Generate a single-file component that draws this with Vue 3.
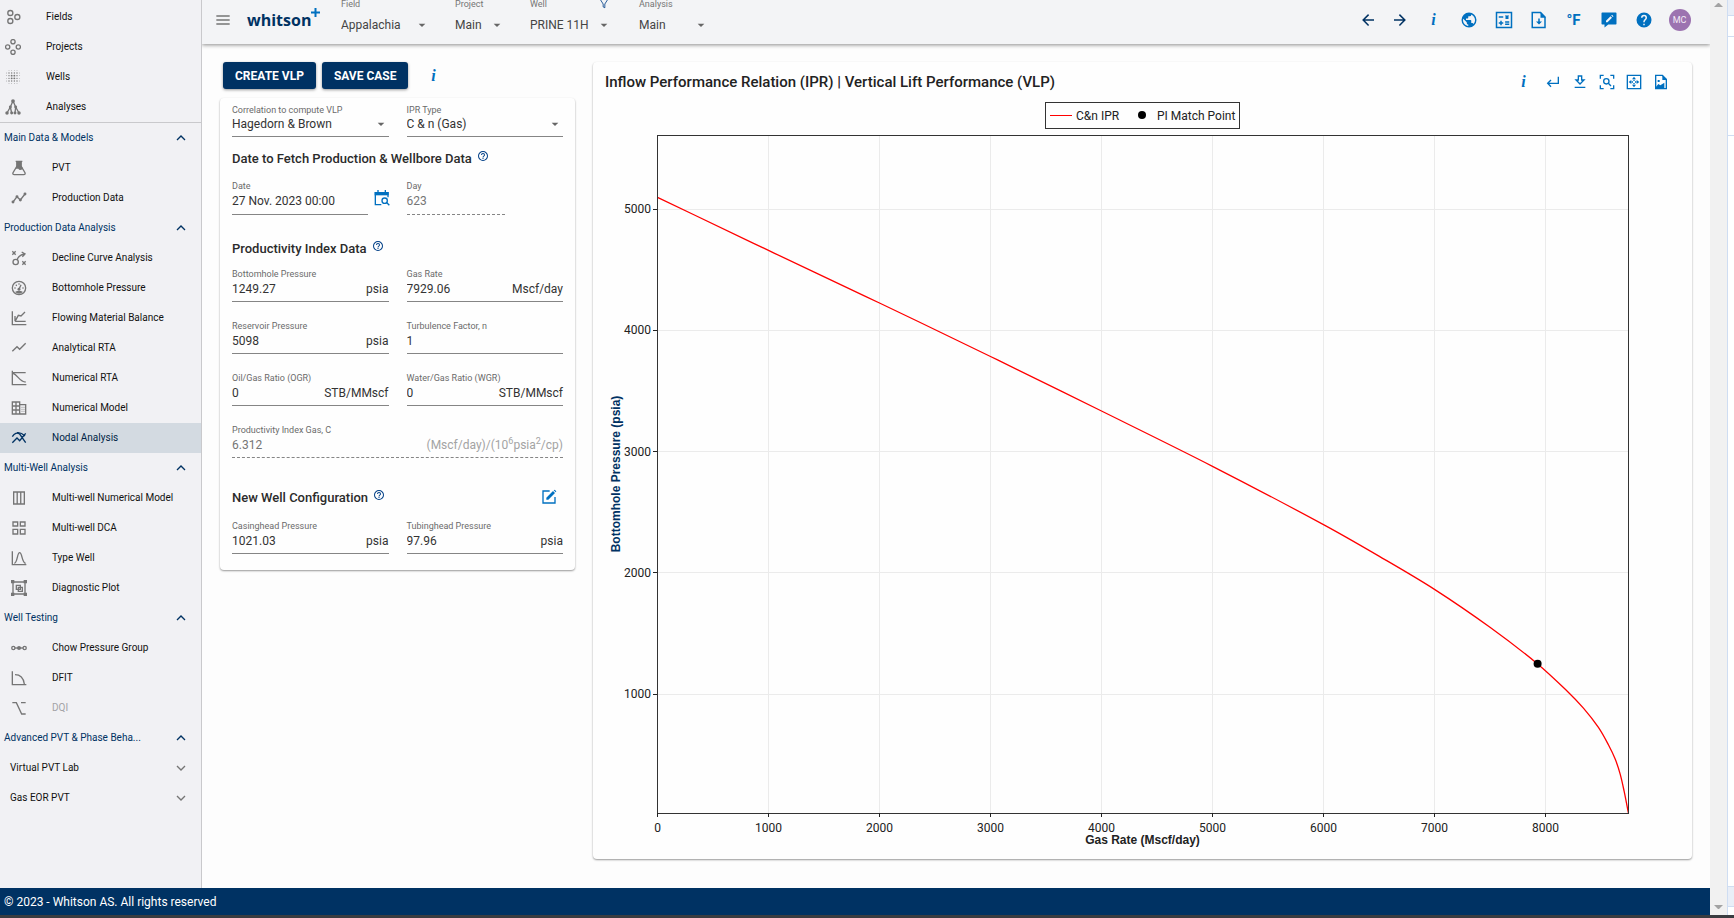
<script setup>
import { h, ref, computed, onMounted, onBeforeUnmount } from 'vue'

const solid = (d) => `<path fill="currentColor" stroke="none" fill-rule="evenodd" d="${d}"/>`
const line = (d) => `<path d="${d}"/>`
const ring = (x, y, r) => `<circle cx="${x}" cy="${y}" r="${r}"/>`
const disc = (x, y, r) => `<circle fill="currentColor" stroke="none" cx="${x}" cy="${y}" r="${r}"/>`

const wellDots = () => {
  let out = ''
  for (let r = 0; r < 6; r++) {
    for (let c = 0; c < 6; c++) {
      const d = Math.hypot(r - 2.5, c - 2.5)
      if (d < 3.4) out += disc(2 + c * 4, 2 + r * 4, d < 1 ? 1.4 : d < 2.3 ? 1 : 0.6)
    }
  }
  return out
}

const icons = {
  fields: ring(8, 6, 3.8) + ring(8, 18, 3.8) + ring(18.5, 12, 3.8),
  projects: ring(12, 4, 3.2) + ring(12, 20, 3.2) + ring(4, 12, 3.2) + ring(20, 12, 3.2),
  wells: wellDots(),
  analyses: disc(12, 3, 2.8) + disc(3, 21, 2.6) + disc(10, 21, 2.2) + disc(15, 21, 2.2) + disc(21, 21, 2.6) + disc(8, 12, 2.2) + disc(16, 12, 2.2) + line('M12 3L8 12L3 21M8 12L10 21M12 3L16 12L21 21M16 12L15 21'),
  flask: line('M9 3V9L3 19Q2 22 5 22H19Q22 22 21 19L15 9V3') + solid('M7 1H17V3H16V9L18 13Q13 17 11 13Q9 13 7 13L8 9V3H7Z'),
  points: line('M3 18L9 10L14 15L21 6') + disc(3, 18, 2.2) + disc(9, 10, 2.2) + disc(14, 15, 2.2) + disc(21, 6, 2.2),
  decline: line('M2 2L7 7M7 2L2 7M17 17L22 22M22 17L17 22M9 15Q11 8 20 6M16 3L21 6L17 10') + ring(7, 18, 4),
  gauge: ring(12, 12, 10) + solid('M6 18Q12 14 18 18Q12 23 6 18Z') + disc(12, 14, 2.2) + line('M12 14L15 7') + disc(6, 12, 1.2) + disc(8, 8, 1.2) + disc(12, 6, 1.2) + disc(18, 12, 1.2),
  flowing: line('M2 2V22H23M6 17H22M6 17V9M6 17L11 8L15 9L21 3'),
  trend: line('M2 17L9 10L13 14L22 5'),
  numericalRta: line('M2 1V22H23M2 4H22M3 5C10 7 13 18 22 18'),
  model: line('M2 3H13V21H2ZM2 9H13M2 15H13M7.5 3V21M13 7H22V21H13M16 11H17M16 14H17M16 17H17M19 11H20M19 14H20M19 17H20'),
  nodal: line('M2 10Q7 2 13 6L22 19M2 19L9 12L13 16L22 5') + line('M9 4Q15 3 21 9'),
  columns: line('M4 3H20V21H4ZM9.3 3V21M14.6 3V21'),
  squares: line('M3 3H10V9H3ZM14 3H21V9H14ZM3 14H10V21H3ZM14 14H21V21H14Z'),
  bell: line('M2 2V22H23M5 20C10 19 9 4 13 4S16 19 22 20'),
  diagnostic: line('M3 3H21V21H3ZM8 8H14V14H8ZM11 11H17V17H11Z') + solid('M0 0H5V5H0ZM19 0H24V5H19ZM0 19H5V24H0ZM19 19H24V24H19Z'),
  chow: ring(3.5, 12, 2.4) + disc(12, 12, 3) + ring(20.5, 12, 2.4) + line('M6 12H18'),
  dfit: line('M2 2V22H23M6 7Q18 7 20 21'),
  option: line('M2 4H8L16 21H22M15 4H22'),
  up: line('M6 15L12 9L18 15'),
  down: line('M6 9L12 15L18 9'),
  caret: solid('M7 10L12 15L17 10H7Z'),
  menu: line('M2 6H22M2 12H22M2 18H22'),
  filter: line('M3 1H21L14 12V21L10 19V12Z'),
  back: solid('M20,11V13H8L13.5,18.5L12.08,19.92L4.16,12L12.08,4.08L13.5,5.5L8,11H20Z'),
  forward: solid('M4,11V13H16L10.5,18.5L11.92,19.92L19.84,12L11.92,4.08L10.5,5.5L16,11H4Z'),
  globe: solid('M17.9,17.39C17.64,16.59 16.89,16 16,16H15V13A1,1 0 0,0 14,12H8V10H10A1,1 0 0,0 11,9V7H13A2,2 0 0,0 15,5V4.59C17.93,5.77 20,8.64 20,12C20,14.08 19.2,15.97 17.9,17.39M11,19.93C7.05,19.44 4,16.08 4,12C4,11.38 4.08,10.78 4.21,10.21L9,15V16A2,2 0 0,0 11,18M12,2A10,10 0 0,0 2,12A10,10 0 0,0 12,22A10,10 0 0,0 22,12A10,10 0 0,0 12,2Z'),
  calculator: line('M2 2H22V22H2ZM5 8H11M14 6L18 10M18 6L14 10M5 16H11M8 13V19M13.5 14.5H19M13.5 17.5H19'),
  fileDown: line('M3 2H14L20 8V22H3Z') + solid('M14 1V9H21ZM11 10H13V14H16L12 18L8 14H11Z'),
  comment: solid('M3 2H21Q22 2 22 3V17Q22 18 21 18H11L6 22V18H3Q2 18 2 17V3Q2 2 3 2ZM8 15H10L16 9L14 7L8 13ZM15 6L17 8L18 7L16 5Z'),
  help: solid('M15.07,11.25L14.17,12.17C13.45,12.89 13,13.5 13,15H11V14.5C11,13.39 11.45,12.39 12.17,11.67L13.41,10.41C13.78,10.05 14,9.55 14,9C14,7.89 13.1,7 12,7A2,2 0 0,0 10,9H8A4,4 0 0,1 12,5A4,4 0 0,1 16,9C16,9.88 15.64,10.67 15.07,11.25M13,19H11V17H13M12,2A10,10 0 0,0 2,12A10,10 0 0,0 12,22A10,10 0 0,0 22,12C22,6.47 17.5,2 12,2Z'),
  helpOutline: solid('M11,18H13V16H11V18M12,2A10,10 0 0,0 2,12A10,10 0 0,0 12,22A10,10 0 0,0 22,12A10,10 0 0,0 12,2M12,20C7.59,20 4,16.41 4,12C4,7.59 7.59,4 12,4C16.41,4 20,7.59 20,12C20,16.41 16.41,20 12,20M12,6A4,4 0 0,0 8,10H10A2,2 0 0,1 12,8A2,2 0 0,1 14,10C14,12 11,11.75 11,15H13C13,12.75 16,12.5 16,10A4,4 0 0,0 12,6Z'),
  enter: line('M20 4V14H4M9 9L4 14L9 19'),
  download: line('M9.5 3H14.5V9H18L12 15L6 9H9.5ZM4 20H20'),
  scan: line('M2 7V2H7M17 2H22V7M22 17V22H17M7 22H2V17M14 14L18 18') + ring(11, 11, 4),
  move: line('M2 2H22V22H2Z') + solid('M12 4L15 8H9ZM12 20L15 16H9ZM4 12L8 9V15ZM20 12L16 9V15ZM11 8.5H13V10.5H11ZM11 13.5H13V15.5H11ZM8.5 11H10.5V13H8.5ZM13.5 11H15.5V13H13.5Z'),
  image: line('M4 2H14L20 8V22H4Z') + solid('M14 1V9H21ZM4 20L8 15L11 17L17 13V21H4ZM7 9H10V12H7Z'),
  calendar: line('M11 22H2V4H21V11M6 0V4M17 0V4M18.5 18.5L23 23') + solid('M1 3H22V8H1Z') + ring(16, 16, 4),
  edit: line('M13 3H3V21H21V12') + solid('M8 13L18 3L21 6L11 16H8ZM19 2L20.5 1L23 3.5L22 5Z')
}

const Icon = (props) => h('svg', { viewBox: '0 0 24 24', 'aria-hidden': 'true', innerHTML: icons[props.name] })
Icon.props = ['name']

const topNav = [
  ['fields', 'Fields'], ['projects', 'Projects'], ['wells', 'Wells'], ['analyses', 'Analyses']
]
const groups = [
  { title: 'Main Data & Models', items: [['flask', 'PVT'], ['points', 'Production Data']] },
  {
    title: 'Production Data Analysis',
    items: [
      ['decline', 'Decline Curve Analysis'], ['gauge', 'Bottomhole Pressure'], ['flowing', 'Flowing Material Balance'],
      ['trend', 'Analytical RTA'], ['numericalRta', 'Numerical RTA'], ['model', 'Numerical Model'], ['nodal', 'Nodal Analysis']
    ]
  },
  {
    title: 'Multi-Well Analysis',
    items: [['columns', 'Multi-well Numerical Model'], ['squares', 'Multi-well DCA'], ['bell', 'Type Well'], ['diagnostic', 'Diagnostic Plot']]
  },
  { title: 'Well Testing', items: [['chow', 'Chow Pressure Group'], ['dfit', 'DFIT'], ['option', 'DQI']] }
]

const pickers = [
  { id: 'pick-field', label: 'Field', value: 'Appalachia' },
  { id: 'pick-project', label: 'Project', value: 'Main' },
  { id: 'pick-well', label: 'Well', value: 'PRINE 11H' },
  { id: 'pick-analysis', label: 'Analysis', value: 'Main' }
]
const headerTools = [
  ['globe', 'Region'], ['calculator', 'Calculator'], ['fileDown', 'Export file']
]
const chartTools = [
  ['enter', 'Reset'], ['download', 'Download'], ['scan', 'Zoom to selection'], ['move', 'Fit'], ['image', 'Save image']
]
const indexFields = [
  { id: 'bhp', label: 'Bottomhole Pressure', value: '1249.27', unit: 'psia' },
  { id: 'rate', label: 'Gas Rate', value: '7929.06', unit: 'Mscf/day' },
  { id: 'pres', label: 'Reservoir Pressure', value: '5098', unit: 'psia' },
  { id: 'turb', label: 'Turbulence Factor, n', value: '1', unit: '' },
  { id: 'ogr', label: 'Oil/Gas Ratio (OGR)', value: '0', unit: 'STB/MMscf' },
  { id: 'wgr', label: 'Water/Gas Ratio (WGR)', value: '0', unit: 'STB/MMscf' }
]
const wellFields = [
  { id: 'casing', label: 'Casinghead Pressure', value: '1021.03', unit: 'psia' },
  { id: 'tubing', label: 'Tubinghead Pressure', value: '97.96', unit: 'psia' }
]

const plotBox = ref(null)
const size = ref({ w: 1075, h: 755 })
const margin = { left: 52, right: 52, top: 43, bottom: 34 }
const xMax = 8748
const yMin = 14.7
const yMax = 5608
const ipr = [
  [0, 5098], [1000, 4660], [2000, 4226], [3000, 3785], [4000, 3335], [5000, 2879], [6000, 2398], [6500, 2138],
  [7000, 1864], [7500, 1551], [7929, 1249], [8192, 1028], [8342, 884], [8477, 725], [8567, 582], [8628, 464],
  [8673, 340], [8709, 197], [8748, 14.7]
]
const right = computed(() => size.value.w - margin.right)
const bottom = computed(() => size.value.h - margin.bottom)
const mid = computed(() => Math.round((margin.left + right.value) / 2))
const sx = (v) => margin.left + 0.5 + (v / xMax) * (right.value - margin.left)
const sy = (v) => bottom.value + 0.5 - ((v - yMin) / (yMax - yMin)) * (bottom.value - margin.top)
const crisp = (v) => Math.floor(v) + 0.5
const xTicks = [0, 1000, 2000, 3000, 4000, 5000, 6000, 7000, 8000]
const yTicks = [1000, 2000, 3000, 4000, 5000]
const curve = computed(() => {
  const p = ipr.map(([q, v]) => [sx(q), sy(v)])
  let d = `M${p[0][0]} ${p[0][1]}`
  for (let i = 0; i < p.length - 1; i++) {
    const a = p[i - 1] || p[i]
    const b = p[i]
    const c = p[i + 1]
    const e = p[i + 2] || c
    const t = Math.hypot(c[0] - b[0], c[1] - b[1]) / 3
    const la = Math.hypot(c[0] - a[0], c[1] - a[1])
    const lb = Math.hypot(e[0] - b[0], e[1] - b[1])
    d += `C${b[0] + ((c[0] - a[0]) / la) * t} ${b[1] + ((c[1] - a[1]) / la) * t} ${c[0] - ((e[0] - b[0]) / lb) * t} ${c[1] - ((e[1] - b[1]) / lb) * t} ${c[0]} ${c[1]}`
  }
  return d
})

let observer
onMounted(() => {
  const measure = () => {
    const box = plotBox.value
    if (box) size.value = { w: box.clientWidth, h: box.clientHeight }
  }
  measure()
  observer = new ResizeObserver(measure)
  observer.observe(plotBox.value)
})
onBeforeUnmount(() => observer.disconnect())
</script>

<template>
  <div class="window">
    <div class="viewport">
      <div class="page">
        <div class="body">
          <nav class="sidebar">
            <a v-for="[icon, label] in topNav" :key="label" href="#" class="row top">
              <Icon :name="icon" class="icon" /><span>{{ label }}</span>
            </a>
            <div class="divider"></div>
            <template v-for="g in groups" :key="g.title">
              <button type="button" class="row group"><span>{{ g.title }}</span><Icon name="up" class="icon chevron" /></button>
              <a
                v-for="[icon, label] in g.items"
                :key="label"
                href="#"
                class="row sub"
                :class="{ active: label === 'Nodal Analysis', disabled: label === 'DQI' }"
              >
                <Icon :name="icon" class="icon" /><span>{{ label }}</span>
              </a>
            </template>
            <button type="button" class="row group"><span>Advanced PVT &amp; Phase Beha...</span><Icon name="up" class="icon chevron" /></button>
            <button type="button" class="row group nested"><span>Virtual PVT Lab</span><Icon name="down" class="icon chevron" /></button>
            <button type="button" class="row group nested"><span>Gas EOR PVT</span><Icon name="down" class="icon chevron" /></button>
          </nav>

          <div class="main">
            <header class="header">
              <button type="button" class="tool menu" aria-label="Menu"><Icon name="menu" class="icon" /></button>
              <a href="#" class="logo">whitson<svg class="plus" viewBox="0 0 9 9" aria-hidden="true"><path d="M4.5 0V9M0 4.5H9" /></svg></a>
              <div v-for="p in pickers" :key="p.id" class="picker" :class="p.id">
                <label :for="p.id">{{ p.label }}</label>
                <select :id="p.id"><option>{{ p.value }}</option></select>
                <Icon name="caret" class="icon caret" />
                <Icon v-if="p.id === 'pick-well'" name="filter" class="icon filter" />
              </div>
              <div class="tools">
                <button type="button" class="tool nav" aria-label="Back"><Icon name="back" class="icon" /></button>
                <button type="button" class="tool nav" aria-label="Forward"><Icon name="forward" class="icon" /></button>
                <button type="button" class="tool info">i</button>
                <button v-for="[icon, label] in headerTools" :key="icon" type="button" class="tool" :aria-label="label">
                  <Icon :name="icon" class="icon" />
                </button>
                <button type="button" class="tool unit-toggle">°F</button>
                <button type="button" class="tool" aria-label="Feedback"><Icon name="comment" class="icon" /></button>
                <button type="button" class="tool" aria-label="Help"><Icon name="help" class="icon" /></button>
                <button type="button" class="tool account"><span class="avatar">MC</span></button>
              </div>
            </header>

            <main class="content">
              <section class="inputs">
                <div class="actions">
                  <button type="button" class="primary">CREATE VLP</button>
                  <button type="button" class="primary">SAVE CASE</button>
                  <button type="button" class="tool info">i</button>
                </div>
                <form class="card form" @submit.prevent>
                  <div class="grid">
                    <div class="field select">
                      <label for="correlation">Correlation to compute VLP</label>
                      <select id="correlation"><option>Hagedorn &amp; Brown</option></select>
                      <Icon name="caret" class="icon caret" />
                    </div>
                    <div class="field select">
                      <label for="ipr">IPR Type</label>
                      <select id="ipr"><option>C &amp; n (Gas)</option></select>
                      <Icon name="caret" class="icon caret" />
                    </div>
                  </div>

                  <h2 class="date-title">Date to Fetch Production &amp; Wellbore Data<Icon name="helpOutline" class="icon hint" /></h2>
                  <div class="grid">
                    <div class="date">
                      <div class="field tall">
                        <label for="date">Date</label>
                        <div class="control"><input id="date" type="text" value="27 Nov. 2023 00:00" /></div>
                      </div>
                      <button type="button" class="tool" aria-label="Pick date"><Icon name="calendar" class="icon" /></button>
                    </div>
                    <div class="field tall muted day">
                      <label for="day">Day</label>
                      <div class="control"><input id="day" type="text" value="623" disabled /></div>
                    </div>
                  </div>

                  <h2 class="index-title">Productivity Index Data<Icon name="helpOutline" class="icon hint" /></h2>
                  <div class="grid">
                    <div v-for="f in indexFields" :key="f.id" class="field">
                      <label :for="f.id">{{ f.label }}</label>
                      <div class="control"><input :id="f.id" type="text" :value="f.value" /><span v-if="f.unit">{{ f.unit }}</span></div>
                    </div>
                    <div class="field muted wide">
                      <label for="pi">Productivity Index Gas, C</label>
                      <div class="control">
                        <input id="pi" type="text" value="6.312" disabled />
                        <span>(Mscf/day)/(10<sup>6</sup>psia<sup>2</sup>/cp)</span>
                      </div>
                    </div>
                  </div>

                  <h2 class="well-title">
                    New Well Configuration<Icon name="helpOutline" class="icon hint" />
                    <button type="button" class="tool edit" aria-label="Edit configuration"><Icon name="edit" class="icon" /></button>
                  </h2>
                  <div class="grid">
                    <div v-for="f in wellFields" :key="f.id" class="field">
                      <label :for="f.id">{{ f.label }}</label>
                      <div class="control"><input :id="f.id" type="text" :value="f.value" /><span>{{ f.unit }}</span></div>
                    </div>
                  </div>
                </form>
              </section>

              <section class="card chart">
                <div class="chart-head">
                  <h1>Inflow Performance Relation (IPR) | Vertical Lift Performance (VLP)</h1>
                  <div class="chart-tools">
                    <button type="button" class="tool info">i</button>
                    <button v-for="[icon, label] in chartTools" :key="icon" type="button" class="tool" :aria-label="label">
                      <Icon :name="icon" class="icon" />
                    </button>
                  </div>
                </div>
                <div ref="plotBox" class="plot">
                  <svg :width="size.w" :height="size.h" role="img" aria-label="Bottomhole pressure against gas rate">
                    <g class="gridlines">
                      <line v-for="t in xTicks.slice(1)" :key="'x' + t" :x1="crisp(sx(t))" :x2="crisp(sx(t))" :y1="margin.top" :y2="bottom" />
                      <line v-for="t in yTicks" :key="'y' + t" :x1="margin.left" :x2="right" :y1="crisp(sy(t))" :y2="crisp(sy(t))" />
                    </g>
                    <path class="curve" :d="curve" />
                    <rect class="frame" :x="margin.left + 0.5" :y="margin.top + 0.5" :width="right - margin.left" :height="bottom - margin.top" />
                    <circle :cx="sx(7929.06)" :cy="sy(1249.27)" r="4" />
                    <g class="ticks">
                      <line v-for="t in xTicks" :key="'x' + t" :x1="crisp(sx(t))" :x2="crisp(sx(t))" :y1="bottom" :y2="bottom + 4" />
                      <line v-for="t in yTicks" :key="'y' + t" :x1="margin.left - 4" :x2="margin.left" :y1="crisp(sy(t))" :y2="crisp(sy(t))" />
                    </g>
                    <text v-for="t in xTicks" :key="'lx' + t" :x="sx(t)" :y="bottom + 19" text-anchor="middle">{{ t }}</text>
                    <text v-for="t in yTicks" :key="'ly' + t" :x="margin.left - 6" :y="sy(t) + 4" text-anchor="end">{{ t }}</text>
                    <text class="axis" :x="(margin.left + right) / 2" :y="bottom + 31" text-anchor="middle">Gas Rate (Mscf/day)</text>
                    <text class="axis vertical" :transform="`translate(15 ${(margin.top + bottom) / 2}) rotate(-90)`" text-anchor="middle">Bottomhole Pressure (psia)</text>
                    <g class="legend">
                      <rect :x="mid - 97.5" y="10.5" width="194" height="26" />
                      <line :x1="mid - 93" :x2="mid - 71" y1="23.5" y2="23.5" />
                      <text :x="mid - 67" y="28">C&amp;n IPR</text>
                      <circle :cx="mid - 1" cy="23" r="4" />
                      <text :x="mid + 14" y="28">PI Match Point</text>
                    </g>
                  </svg>
                </div>
              </section>
            </main>
          </div>
        </div>
        <footer class="footer">© 2023 - Whitson AS. All rights reserved</footer>
      </div>
      <div class="scrollbar" aria-hidden="true"><i class="arrow-up"></i><i class="arrow-down"></i></div>
      <div class="edge" aria-hidden="true"><i></i><i></i><i></i><i></i><i></i><i></i></div>
    </div>
    <div class="taskbar"></div>
  </div>
</template>

<style>
html,
body {
  margin: 0;
  background: #fdfdfd;
}
</style>

<style scoped>
.window {
  min-height: 100vh;
  display: flex;
  flex-direction: column;
  font-family: Roboto, "Liberation Sans", sans-serif;
  font-size: 12px;
  color: #333;
}
.window * {
  box-sizing: border-box;
}
button,
input,
select {
  margin: 0;
  padding: 0;
  border: 0;
  background: none;
  font: inherit;
  color: inherit;
  border-radius: 0;
}
a {
  color: inherit;
  text-decoration: none;
}
.icon {
  width: 16px;
  height: 16px;
  flex: none;
  display: block;
  fill: none;
  stroke: currentColor;
  stroke-width: 2;
}
.viewport {
  flex: 1;
  display: flex;
}
.page {
  flex: 1;
  min-width: 0;
  display: flex;
  flex-direction: column;
}
.body {
  flex: 1;
  display: flex;
}
.taskbar {
  height: 3px;
  background: #3a3c40;
}

/* Sidebar */
.sidebar {
  width: 202px;
  flex: none;
  padding-top: 2px;
  background: #f1f1f4;
  border-right: 1px solid #c9c9cc;
}
.row {
  width: 100%;
  height: 30px;
  display: flex;
  align-items: center;
  font-size: 10px;
  color: #111;
}
.row span {
  padding-bottom: 1px;
}
.row .icon {
  color: #757575;
}
.row.top {
  padding-left: 5px;
  gap: 25px;
}
.row.sub {
  padding-left: 11px;
  gap: 25px;
}
.row.group {
  justify-content: space-between;
  padding: 0 12px 0 4px;
  color: #003263;
}
.row.group .icon {
  color: #003263;
}
.row.group.nested {
  padding-left: 10px;
  color: #111;
}
.row.group.nested .icon {
  color: #757575;
}
.row.active {
  background: #d3dae1;
  color: #001f45;
}
.row.active .icon {
  color: #003263;
}
.row.disabled {
  color: #a3a3a6;
}
.divider {
  height: 1px;
  background: #c9c9cc;
}

/* Header */
.main {
  flex: 1;
  min-width: 0;
  display: flex;
  flex-direction: column;
}
.header {
  height: 44px;
  display: flex;
  background: #f3f4f6;
  box-shadow: 0 1px 4px rgba(0, 0, 0, 0.45);
  clip-path: inset(0 0 -8px 0);
}
.tool {
  display: flex;
  align-items: center;
  justify-content: center;
  color: #0070c0;
}
.info {
  font: italic bold 16px "Liberation Serif", serif;
}
.menu {
  width: 16px;
  height: 40px;
  margin-left: 13px;
  color: #757575;
}
.logo {
  position: relative;
  width: 94px;
  margin-left: 16px;
  font: 700 16px/40px "Open Sans", "Noto Sans", sans-serif;
  color: #003263;
}
.plus {
  position: absolute;
  left: 64px;
  top: 8px;
  width: 9px;
  height: 9px;
  fill: none;
  stroke: #0070c0;
  stroke-width: 2;
}
.picker {
  position: relative;
  display: flex;
  flex-direction: column;
}
.picker label {
  font-size: 9px;
  line-height: 9px;
  color: #757575;
}
.picker select {
  width: 100%;
  height: 16px;
  margin-top: 8px;
  appearance: none;
  color: #444;
}
.pick-field { width: 89px; margin-right: 25px; }
.pick-project { width: 50px; margin-right: 25px; }
.pick-well { width: 82px; margin-right: 27px; }
.pick-analysis { width: 70px; }
.caret {
  position: absolute;
  right: 0;
  top: 17px;
  color: #666;
  pointer-events: none;
}
.picker .filter {
  position: absolute;
  right: 3px;
  top: -1px;
  width: 10px;
  height: 10px;
  color: #003f87;
}
.tools {
  margin-left: auto;
  margin-right: 12px;
  height: 40px;
  display: flex;
}
.tools .tool {
  width: 35px;
}
.tools .icon {
  width: 18px;
  height: 18px;
}
.tools .nav {
  width: 32px;
  color: #003263;
}
.tools .account {
  width: 37px;
}
.tools .unit-toggle {
  font-size: 15px;
  font-weight: 700;
}
.avatar {
  width: 22px;
  height: 22px;
  border-radius: 50%;
  background: #9c73b0;
  color: #f3eaf6;
  font-size: 9px;
  line-height: 22px;
  text-align: center;
}

/* Content */
.content {
  flex: 1;
  display: grid;
  grid-template-columns: 355px minmax(0, 1fr);
  gap: 18px;
  padding: 18px 18px 29px;
  background: #fdfdfd;
}
.card {
  background: #fefefe;
  border-radius: 4px;
  box-shadow: 0 1px 2px rgba(0, 0, 0, 0.4);
}
.actions {
  display: flex;
  gap: 6px;
  padding-left: 3px;
  margin-bottom: 9px;
}
.primary {
  height: 27px;
  padding: 0 12px;
  border-radius: 3px;
  background: #003263;
  color: #fff;
  font-size: 12px;
  font-weight: 700;
  box-shadow: 0 1px 3px rgba(0, 0, 0, 0.4);
}
.actions .info {
  width: 38px;
}
.form {
  padding: 6px 12px 16px;
}
.grid {
  display: grid;
  grid-template-columns: repeat(2, minmax(0, 1fr));
  gap: 18px;
}
.field {
  position: relative;
  height: 34px;
  border-bottom: 1px solid #858585;
}
.field label {
  display: block;
  font-size: 9px;
  line-height: 12px;
  color: #6b6b6b;
}
.control {
  height: 18px;
  display: flex;
  align-items: center;
}
.control input {
  flex: 1;
  width: 0;
  min-width: 0;
  height: 18px;
}
.field.select {
  height: 33px;
}
.field select {
  width: 100%;
  height: 15px;
  display: block;
  appearance: none;
}
.field .caret {
  top: 12px;
}
.field.tall {
  height: 35px;
}
.muted {
  border-bottom-style: dashed;
}
.muted input {
  color: #757575;
}
.muted span {
  color: #a3a3a3;
}
.muted sup {
  font-size: 9px;
  line-height: 0;
}
.wide {
  grid-column: 1 / -1;
}
.day {
  width: 98px;
}
.date {
  display: flex;
}
.date .field {
  flex: none;
  width: 136px;
}
.date .tool {
  flex: none;
  width: 28px;
}
h2 {
  display: flex;
  align-items: center;
  height: 20px;
  margin: 0;
  font-size: 13px;
  font-weight: 500;
  color: #2b2b2b;
}
.hint {
  width: 12px;
  height: 12px;
  margin: 0 0 4px 5px;
  color: #003f87;
}
.date-title { margin: 11px 0 12px; }
.index-title { margin: 23px 0 10px; }
.well-title { margin: 29px 0 13px; }
.edit {
  margin: 0 6px 0 auto;
}

/* Chart */
.chart {
  display: flex;
  flex-direction: column;
  padding: 10px 12px 12px;
}
.chart-head {
  height: 20px;
  display: flex;
  align-items: center;
  justify-content: space-between;
}
h1 {
  margin: 0;
  font-size: 15px;
  font-weight: 500;
  color: #222;
}
.chart-tools {
  display: flex;
  margin-right: 6px;
}
.chart-tools .tool {
  width: 27px;
}
.chart-tools .info {
  width: 31px;
}
.plot {
  flex: 1;
  min-height: 300px;
  overflow: hidden;
}
.plot svg {
  display: block;
}
.plot text {
  font-size: 12px;
  fill: #222;
}
.plot .axis {
  font-family: "Liberation Sans", sans-serif;
  font-weight: 700;
}
.plot .vertical {
  fill: #003263;
}
.gridlines line {
  stroke: #ebebeb;
}
.ticks line {
  stroke: #222;
}
.frame,
.legend rect {
  fill: none;
  stroke: #333;
}
.curve {
  fill: none;
  stroke: #f00;
  stroke-width: 1.3;
}
.legend line {
  stroke: #f00;
}

.footer {
  height: 27px;
  padding-left: 4px;
  background: #003263;
  color: #fff;
  font-size: 12px;
  line-height: 28px;
}
.scrollbar {
  width: 17px;
  padding: 3px 4px 6px;
  display: flex;
  flex-direction: column;
  justify-content: space-between;
  background: #f1f1f1;
}
.scrollbar i {
  border: 4px solid transparent;
}
.scrollbar .arrow-up {
  border-top-width: 0;
  border-bottom-color: #a3a3a3;
}
.scrollbar .arrow-down {
  border-bottom-width: 0;
  border-top-color: #a3a3a3;
}
.edge {
  width: 7px;
  display: grid;
  grid-template-rows: 16px 21px 99px 1fr 20px 8px;
  border-left: 1px solid #cfddf2;
  background: #fff;
}
.edge i {
  border-bottom: 1px solid #cfddf2;
}
.edge i:first-child,
.edge i:nth-child(5) {
  background: #e9eef7;
}
.edge i:last-child {
  border: 0;
}
</style>
